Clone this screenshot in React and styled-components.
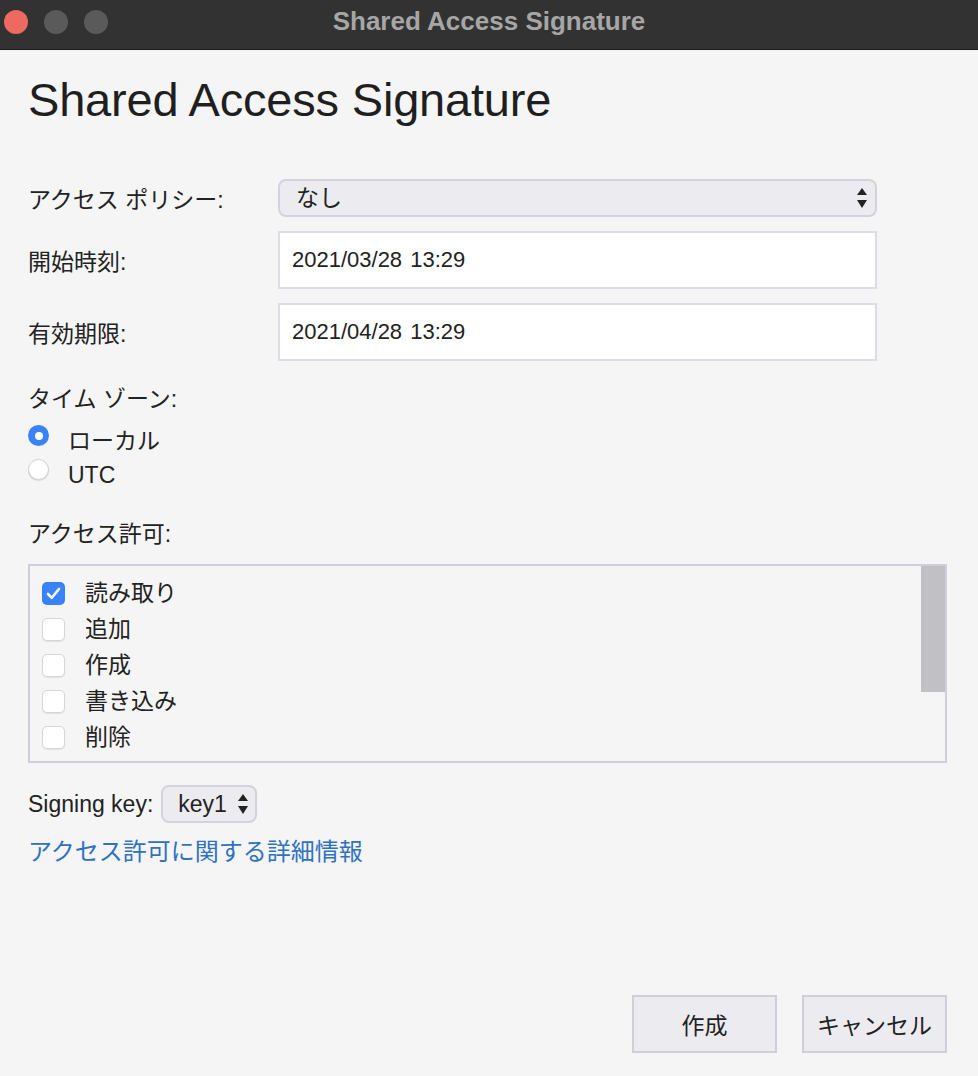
import React from "react";
import styled, { createGlobalStyle } from "styled-components";

const Global = createGlobalStyle`
  html, body { margin: 0; padding: 0; background: #f5f5f5; }
  body { font-family: "Liberation Sans", "Noto Sans CJK JP", sans-serif; color: #222; }
  * { box-sizing: border-box; }
`;

const Window = styled.div`
  display: flex;
  flex-direction: column;
  width: 978px;
  height: 1076px;
  background: #f5f5f5;
  overflow: hidden;
`;

const TitleBar = styled.div`
  position: relative;
  height: 50px;
  flex: none;
  background: #323232;
  display: flex;
  align-items: center;
  justify-content: center;
  border-bottom: 1px solid #1e1e1e;
`;

const Lights = styled.div`
  position: absolute;
  left: 4px;
  top: 10px;
  display: flex;
  gap: 16px;
`;

const Light = styled.span`
  width: 24px;
  height: 24px;
  border-radius: 50%;
  background: ${(p) => p.$color};
`;

const WindowTitle = styled.div`
  font-family: "Liberation Sans", sans-serif;
  font-weight: bold;
  font-size: 26px;
  color: #a6a6a6;
  margin-top: -6px;
`;

const Body = styled.div`
  flex: 1;
  display: flex;
  flex-direction: column;
  padding: 0 31px 0 28px;
`;

const Heading = styled.h1`
  margin: 22px 0 0;
  font-family: "Liberation Sans", sans-serif;
  font-weight: normal;
  font-size: 47px;
  line-height: 56px;
  color: #1f1f1f;
  letter-spacing: -0.2px;
`;

const FormGrid = styled.div`
  margin-top: 51px;
  display: grid;
  grid-template-columns: 250px 599px;
  grid-template-rows: 38px 58px 58px;
  row-gap: 14px;
  align-items: center;
`;

const Label = styled.div`
  font-size: 23px;
  line-height: 30px;
  color: #222;
  white-space: nowrap;
  margin-top: ${(p) => p.$mt || 0}px;
`;

const GridLabel = styled(Label)`
  padding-top: 4px;
`;

const SelectWrap = styled.div`
  position: relative;
  height: 38px;
  flex: none;
  width: ${(p) => p.$w || "100%"};
`;

const Select = styled.select`
  appearance: none;
  -webkit-appearance: none;
  width: 100%;
  height: 100%;
  margin: 0;
  border: 2px solid #d3d3de;
  border-radius: 8px;
  background: #ececf0;
  font-family: "Liberation Sans", "Noto Sans CJK JP", sans-serif;
  font-size: 23px;
  color: #222;
  padding: 0 0 0 ${(p) => p.$pl || 16}px;
  outline: none;
`;

const ArrowIcon = styled.svg`
  position: absolute;
  right: ${(p) => p.$r || 10}px;
  top: 9px;
  pointer-events: none;
`;

const Arrows = ({ r }) => (
  <ArrowIcon $r={r} width="10" height="20" viewBox="0 0 10 20">
    <polygon points="5,0 10,7 0,7" fill="#222" />
    <polygon points="0,12 10,12 5,20" fill="#222" />
  </ArrowIcon>
);

const TextInput = styled.input`
  width: 100%;
  height: 58px;
  margin: 0;
  border: 2px solid #dcdce4;
  background: #fff;
  font-family: "Liberation Sans", sans-serif;
  font-size: 22px;
  color: #222;
  padding: 0 0 0 12px;
  outline: none;
  word-spacing: 2px;
`;

const RadioGroup = styled.div`
  margin-top: 7px;
  display: flex;
  flex-direction: column;
`;

const RadioRow = styled.label`
  display: flex;
  align-items: flex-start;
  height: 34px;
  gap: 19px;
`;

const RadioDot = styled.span`
  flex: none;
  margin-top: 4px;
  width: 21px;
  height: 21px;
  border-radius: 50%;
  display: flex;
  align-items: center;
  justify-content: center;
  background: ${(p) => (p.$on ? "#3a82f7" : "#fff")};
  border: ${(p) => (p.$on ? "none" : "1px solid #d0d0d0")};
  box-shadow: ${(p) => (p.$on ? "none" : "0 1px 1px rgba(0,0,0,0.12)")};
  &::after {
    content: "";
    display: ${(p) => (p.$on ? "block" : "none")};
    width: 8px;
    height: 8px;
    border-radius: 50%;
    background: #fff;
  }
`;

const RadioText = styled.span`
  font-size: 23px;
  line-height: 30px;
  margin-top: 5px;
`;

const ListBox = styled.div`
  position: relative;
  margin-top: 15px;
  width: 919px;
  height: 199px;
  flex: none;
  border: 2px solid #cfcfdb;
  background: #f5f5f5;
  overflow: hidden;
  padding: 9px 0 0 12px;
`;

const ScrollThumb = styled.div`
  position: absolute;
  top: 0;
  right: 0;
  width: 24px;
  height: 126px;
  background: #c1c1c5;
`;

const CheckRow = styled.label`
  display: flex;
  align-items: center;
  height: 36px;
  gap: 20px;
`;

const CheckBox = styled.span`
  flex: none;
  width: 23px;
  height: 23px;
  border-radius: 5px;
  display: flex;
  align-items: center;
  justify-content: center;
  background: ${(p) => (p.$on ? "#3a82f7" : "#fff")};
  border: ${(p) => (p.$on ? "none" : "1px solid #d6d6d6")};
  box-shadow: ${(p) => (p.$on ? "none" : "0 1px 1px rgba(0,0,0,0.08)")};
`;

const CheckText = styled.span`
  font-size: 23px;
  line-height: 30px;
`;

const SigningRow = styled.div`
  margin-top: 22px;
  display: flex;
  align-items: center;
  gap: 8px;
  height: 38px;
`;

const Link = styled.a`
  margin-top: 14px;
  font-size: 24px;
  line-height: 30px;
  color: #2f72c2;
  text-decoration: none;
  align-self: flex-start;
  cursor: pointer;
`;

const Footer = styled.div`
  margin-top: auto;
  margin-bottom: 23px;
  display: flex;
  justify-content: flex-end;
  gap: 25px;
`;

const Button = styled.button`
  width: 145px;
  height: 58px;
  border: 2px solid #cfcfdb;
  background: #ececf0;
  font-family: "Liberation Sans", "Noto Sans CJK JP", sans-serif;
  font-size: 23px;
  color: #222;
  padding: 0;
`;

const permissions = [
  { label: "読み取り", on: true },
  { label: "追加" },
  { label: "作成" },
  { label: "書き込み" },
  { label: "削除" },
  { label: "バージョンの削除" },
];

export default function App() {
  return (
    <>
      <Global />
      <Window>
        <TitleBar>
          <Lights>
            <Light $color="#ee6a5e" />
            <Light $color="#5a5a5a" />
            <Light $color="#5a5a5a" />
          </Lights>
          <WindowTitle>Shared Access Signature</WindowTitle>
        </TitleBar>
        <Body>
          <Heading>Shared Access Signature</Heading>
          <FormGrid>
            <GridLabel>アクセス ポリシー:</GridLabel>
            <SelectWrap>
              <Select defaultValue="none">
                <option value="none">なし</option>
              </Select>
              <Arrows r={10} />
            </SelectWrap>
            <GridLabel>開始時刻:</GridLabel>
            <TextInput readOnly value="2021/03/28 13:29" />
            <GridLabel>有効期限:</GridLabel>
            <TextInput readOnly value="2021/04/28 13:29" />
          </FormGrid>
          <Label $mt={23}>タイム ゾーン:</Label>
          <RadioGroup>
            <RadioRow>
              <RadioDot $on />
              <RadioText>ローカル</RadioText>
            </RadioRow>
            <RadioRow>
              <RadioDot />
              <RadioText>UTC</RadioText>
            </RadioRow>
          </RadioGroup>
          <Label $mt={30}>アクセス許可:</Label>
          <ListBox>
            {permissions.map((p) => (
              <CheckRow key={p.label}>
                <CheckBox $on={p.on}>
                  {p.on && (
                    <svg width="15" height="13" viewBox="0 0 15 13">
                      <path
                        d="M2 7 L5.8 10.8 L13 2"
                        fill="none"
                        stroke="#fff"
                        strokeWidth="2.6"
                        strokeLinecap="round"
                        strokeLinejoin="round"
                      />
                    </svg>
                  )}
                </CheckBox>
                <CheckText>{p.label}</CheckText>
              </CheckRow>
            ))}
            <ScrollThumb />
          </ListBox>
          <SigningRow>
            <Label>Signing key:</Label>
            <SelectWrap $w="96px">
              <Select $pl={15} defaultValue="key1">
                <option value="key1">key1</option>
              </Select>
              <Arrows r={9} />
            </SelectWrap>
          </SigningRow>
          <Link>アクセス許可に関する詳細情報</Link>
          <Footer>
            <Button>作成</Button>
            <Button>キャンセル</Button>
          </Footer>
        </Body>
      </Window>
    </>
  );
}
